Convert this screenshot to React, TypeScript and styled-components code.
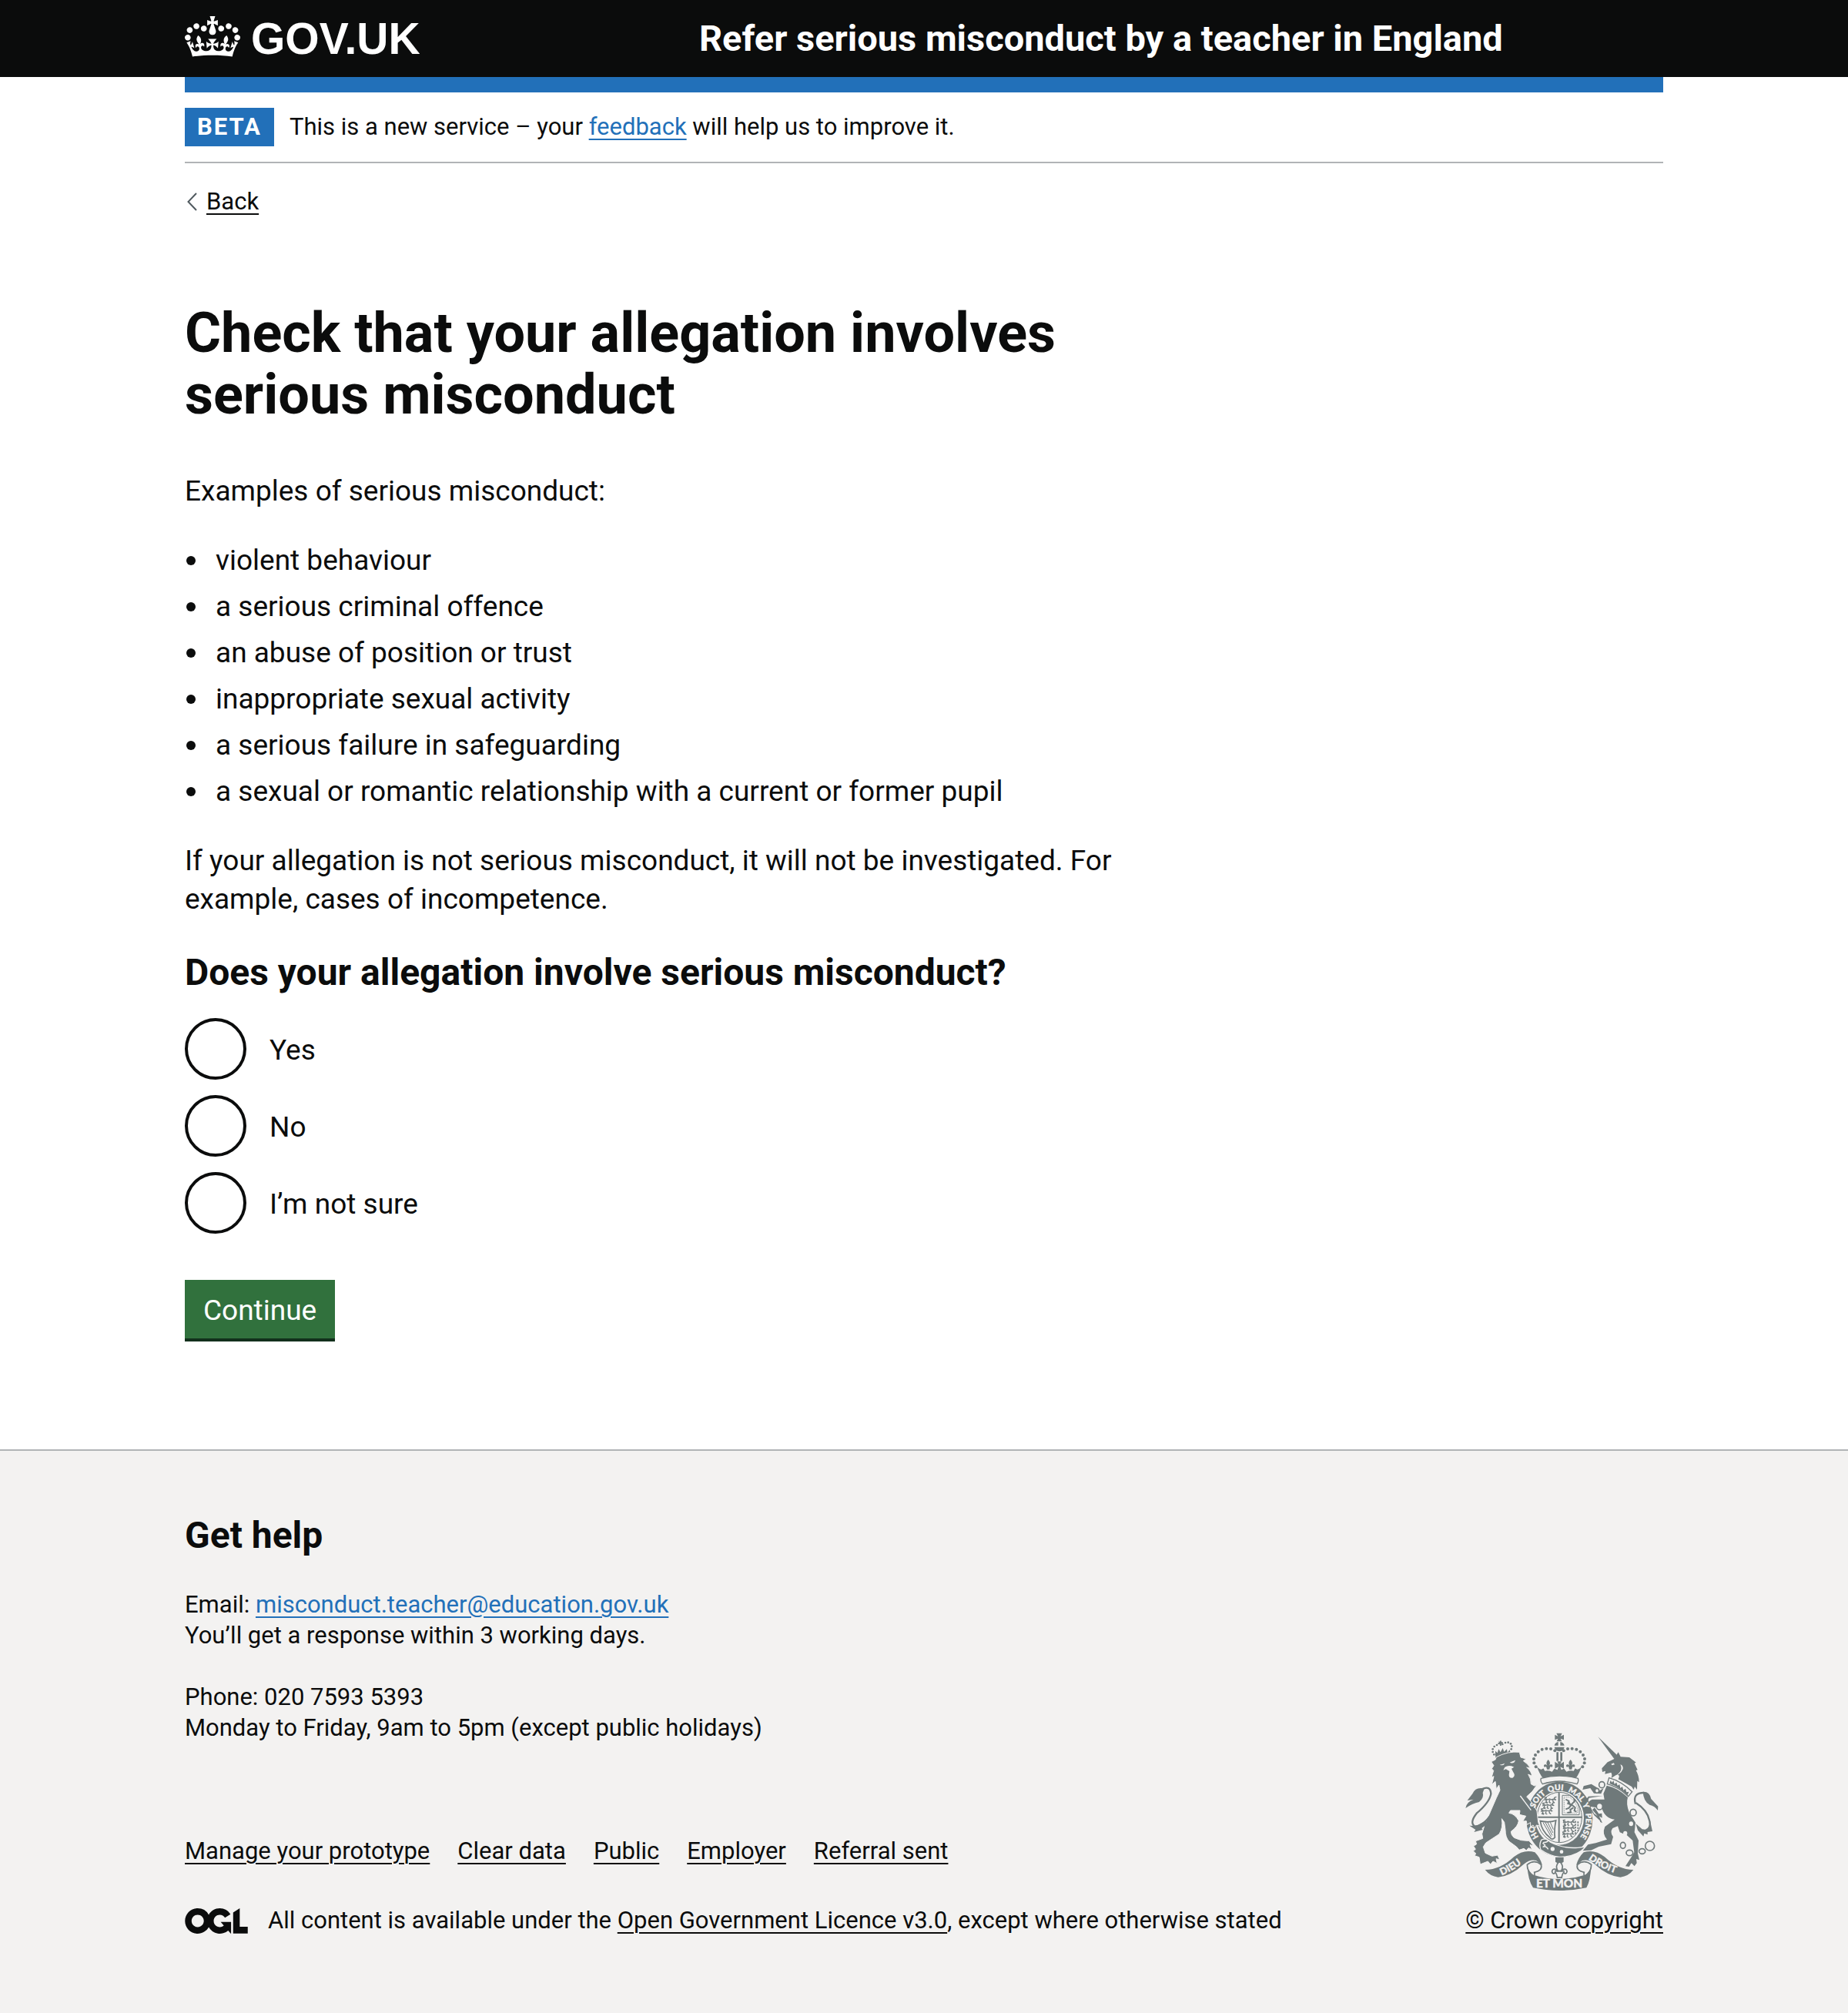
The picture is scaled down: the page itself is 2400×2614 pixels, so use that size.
import React from "react";
import styled, { createGlobalStyle, css } from "styled-components";

const color = {
  ink: "#0b0c0c",
  white: "#ffffff",
  blue: "#2270b9",
  green: "#31713d",
  greenShadow: "#12301c",
  border: "#b1b4b6",
  footer: "#f3f2f1",
  crest: "#6f797a",
  chevron: "#505a5f",
};

const GlobalStyle = createGlobalStyle`
  *, *::before, *::after { box-sizing: border-box; }
  body {
    margin: 0;
    background: ${color.footer};
    color: ${color.ink};
    font-family: Roboto, "Liberation Sans", sans-serif;
  }
`;

const bodyText = css`
  font-size: 37px;
  line-height: 50px;
`;

const smallText = css`
  font-size: 31px;
  line-height: 40px;
`;

const Container = styled.div`
  width: calc(100% - 120px);
  max-width: 1920px;
  margin: 0 auto;
`;

const Header = styled.header`
  background: ${color.ink};
  color: ${color.white};
`;

const HeaderRow = styled(Container)`
  display: grid;
  grid-template-columns: 1fr 2fr;
  align-items: center;
  min-height: 100px;
`;

const HomeLink = styled.a`
  display: flex;
  align-items: center;
  gap: 14px;
  color: inherit;
  text-decoration: none;
  font-family: "Liberation Sans", Arial, sans-serif;
  font-weight: 700;
  font-size: 57px;
  line-height: 60px;
`;

const ServiceLink = styled.a`
  padding-left: 28px;
  color: inherit;
  text-decoration: none;
  font-weight: 700;
  font-size: 47px;
  line-height: 60px;
`;

const Page = styled.div`
  background: ${color.white};
`;

const BlueBar = styled.div`
  height: 20px;
  background: ${color.blue};
`;

const PhaseBanner = styled.div`
  ${smallText}
  display: flex;
  align-items: center;
  gap: 20px;
  padding: 20px 0;
  border-bottom: 2px solid ${color.border};
`;

const Tag = styled.strong`
  padding: 5px 16px;
  background: ${color.blue};
  color: ${color.white};
  letter-spacing: 2px;
`;

const TextLink = styled.a<{ $tone?: "blue" | "ink" }>`
  color: ${(p) => (p.$tone === "blue" ? color.blue : color.ink)};
  text-decoration: underline;
  text-decoration-thickness: 2px;
  text-underline-offset: 5px;
`;

const BackRow = styled.nav`
  ${smallText}
  display: flex;
  align-items: center;
  gap: 12px;
  padding: 30px 0 0 3px;
`;

const Main = styled.main`
  padding: 111px 0 140px;
`;

const TwoThirds = styled.div`
  max-width: 1250px;
`;

const Title = styled.h1`
  margin: 0 0 60px;
  font-size: 72px;
  line-height: 80px;
  font-weight: 700;
`;

const Paragraph = styled.p`
  ${bodyText}
  margin: 0 0 40px;
`;

const BulletList = styled.ul`
  ${bodyText}
  display: grid;
  gap: 10px;
  margin: 0 0 40px;
  padding: 0 0 0 2px;
  list-style: none;
`;

const Bullet = styled.li`
  display: flex;
  align-items: center;
  gap: 26px;
  &::before {
    content: "";
    flex: none;
    width: 12px;
    height: 12px;
    border-radius: 50%;
    background: ${color.ink};
  }
`;

const Fieldset = styled.fieldset`
  margin: 0 0 60px;
  padding: 0;
  border: 0;
`;

const Legend = styled.legend`
  padding: 0 0 29px;
  font-size: 48px;
  line-height: 60px;
  font-weight: 700;
`;

const RadioList = styled.div`
  display: grid;
  gap: 20px;
`;

const RadioRow = styled.div`
  display: flex;
  align-items: center;
`;

const Radio = styled.input`
  appearance: none;
  width: 80px;
  height: 80px;
  margin: 0;
  border: 4px solid ${color.ink};
  border-radius: 50%;
  background: ${color.white};
  &:checked {
    background: radial-gradient(circle, ${color.ink} 20px, ${color.white} 21px);
  }
`;

const RadioLabel = styled.label`
  ${bodyText}
  padding: 4px 30px 0;
`;

const SubmitButton = styled.button`
  ${bodyText}
  display: block;
  padding: 15px 24px 11px;
  border: 0;
  background: ${color.green};
  box-shadow: 0 4px 0 ${color.greenShadow};
  color: ${color.white};
  font-family: inherit;
  margin-bottom: 4px;
`;

const Footer = styled.footer`
  ${smallText}
  padding: 80px 0 100px;
  border-top: 2px solid ${color.border};
  background: ${color.footer};
`;

const FooterMeta = styled(Container)`
  display: flex;
  align-items: flex-end;
  justify-content: space-between;
  gap: 60px;
`;

const FooterHeading = styled.h2`
  margin: 0 0 40px;
  font-size: 48px;
  line-height: 60px;
  font-weight: 700;
`;

const Contact = styled.p`
  margin: 0 0 40px;
`;

const FooterLinks = styled.ul`
  display: flex;
  flex-wrap: wrap;
  gap: 10px 36px;
  margin: 120px 0 50px;
  padding: 0;
  list-style: none;
`;

const Licence = styled.div`
  display: flex;
  align-items: center;
  gap: 26px;
`;

const Copyright = styled.a`
  display: grid;
  justify-items: start;
  gap: 18px;
  flex: none;
  color: ${color.ink};
  text-decoration: none;
`;

const CopyrightText = styled.span`
  text-decoration: underline;
  text-decoration-thickness: 2px;
  text-underline-offset: 5px;
`;

const CrownSvg = styled.svg`
  margin-bottom: 5px;
`;

const Crown = () => (
  <CrownSvg width="72" height="53" viewBox="0 0 132 97" fill="currentColor" aria-hidden="true">
    <path
      fillRule="evenodd"
      d="M25 30.2c3.5 1.5 7.7-.2 9.1-3.7 1.5-3.6-.2-7.8-3.9-9.2-3.6-1.4-7.6.3-9.1 3.9-1.4 3.5.3 7.5 3.9 9zM9 39.5c3.6 1.5 7.8-.2 9.2-3.7 1.5-3.6-.2-7.8-3.9-9.1-3.6-1.5-7.6.2-9.1 3.8-1.4 3.5.3 7.5 3.8 9zM4.4 57.2c3.5 1.5 7.7-.2 9.1-3.8 1.5-3.6-.2-7.7-3.9-9.1-3.5-1.5-7.6.3-9.1 3.8-1.4 3.5.3 7.6 3.9 9.1zm38.3-21.4c3.5 1.5 7.7-.2 9.1-3.8 1.5-3.6-.2-7.7-3.9-9.1-3.6-1.5-7.6.3-9.1 3.8-1.3 3.6.4 7.7 3.9 9.1zm64.4-5.6c-3.6 1.5-7.8-.2-9.1-3.7-1.5-3.6.2-7.8 3.8-9.2 3.6-1.4 7.7.3 9.2 3.9 1.3 3.5-.4 7.5-3.9 9zm15.9 9.3c-3.6 1.5-7.7-.2-9.1-3.7-1.5-3.6.2-7.8 3.7-9.1 3.6-1.5 7.7.2 9.2 3.8 1.5 3.5-.3 7.5-3.8 9zm4.7 17.7c-3.6 1.5-7.8-.2-9.2-3.8-1.5-3.6.2-7.7 3.9-9.1 3.6-1.5 7.7.3 9.2 3.8 1.3 3.5-.4 7.6-3.9 9.1zM89.3 35.8c-3.6 1.5-7.8-.2-9.2-3.8-1.4-3.6.2-7.7 3.9-9.1 3.6-1.5 7.7.3 9.2 3.8 1.4 3.6-.3 7.7-3.9 9.1zM69.7 17.7l8.9 4.7V9.3l-8.9 2.8c-.2-.3-.5-.6-.9-.9L72.4 0H59.6l3.5 11.2c-.3.3-.6.5-.9.9l-8.8-2.8v13.1l8.8-4.7c.3.3.6.7.9.9l-5 15.4v.1c-.2.8-.4 1.6-.4 2.4 0 4.1 3.1 7.5 7 8.1h.2c.3 0 .7.1 1 .1.4 0 .7 0 1-.1h.2c4-.6 7.1-4.1 7.1-8.1 0-.8-.1-1.7-.4-2.4V34l-5.1-15.4c.4-.2.7-.6 1-.9zM66 92.8c16.9 0 32.8 1.1 47.1 3.2 4-16.9 8.9-26.7 14-33.5l-9.6-3.4c1 4.9 1.1 7.2 0 10.2-1.5-1.4-3-4.3-4.2-8.7L108.6 76c2.8-2 5-3.2 7.5-3.3-4.4 9.4-10 11.9-13.6 11.2-4.3-.8-6.3-4.6-5.6-7.9 1-4.7 5.7-5.9 8-.5 4.3-8.7-3-11.4-7.6-8.8 7.1-7.2 7.9-13.5 2.1-21.1-8 6.1-8.1 12.3-4.5 20.8-4.7-5.4-12.1-2.5-9.5 6.2 3.4-5.2 7.9-2 7.2 3.1-.6 4.3-6.4 7.8-13.5 7.2-10.3-.9-10.9-8-11.2-13.8 2.5-.5 7.1 1.8 11 7.3L80.2 60c-4.1 4.4-8 5.3-12.3 5.4 1.4-4.4 8-11.6 8-11.6H55.5s6.4 7.2 7.9 11.6c-4.2-.1-8-1-12.3-5.4l1.4 16.4c3.9-5.5 8.5-7.7 10.9-7.3-.3 5.8-.9 12.8-11.1 13.8-7.2.6-12.9-2.9-13.5-7.2-.7-5 3.8-8.3 7.1-3.1 2.7-8.7-4.6-11.6-9.4-6.2 3.7-8.5 3.6-14.7-4.6-20.8-5.8 7.6-5 13.9 2.2 21.1-4.7-2.6-11.9.1-7.7 8.8 2.3-5.5 7.1-4.2 8.1.5.7 3.3-1.3 7.1-5.7 7.9-3.5.7-9-1.8-13.5-11.2 2.5.1 4.7 1.3 7.5 3.3l-4.7-15.4c-1.2 4.4-2.7 7.2-4.3 8.7-1.1-3-.9-5.3 0-10.2l-9.5 3.4c5 6.9 9.9 16.7 14 33.5 14.8-2.1 30.8-3.2 47.7-3.2z"
    />
  </CrownSvg>
);

const Chevron = () => (
  <svg width="13" height="24" viewBox="0 0 13 24" fill="none" stroke={color.chevron} strokeWidth="2" aria-hidden="true">
    <path d="M12 1 1.5 12 12 23" />
  </svg>
);

const OglLogo = () => (
  <svg width="82" height="33" viewBox="0 0 483.2 195.7" fill="currentColor" aria-hidden="true">
    <path d="M421.5 142.8V.1l-50.7 32.3v161.1h112.4v-50.7zm-122.3-9.6A47.12 47.12 0 0 1 221 97.8c0-26 21.1-47.1 47.1-47.1 16.7 0 31.4 8.7 39.7 21.8l42.7-27.2A97.63 97.63 0 0 0 268.1 0c-36.5 0-68.3 20.1-85.1 49.7A98 98 0 0 0 97.8 0C43.9 0 0 43.9 0 97.8s43.9 97.8 97.8 97.8c36.5 0 68.3-20.1 85.1-49.7a97.76 97.76 0 0 0 149.6 25.4l19.4 22.2h3v-87.8h-80l24.3 27.5zM97.8 145c-26 0-47.1-21.1-47.1-47.1s21.1-47.1 47.1-47.1 47.1 21.1 47.1 47.1S123.8 145 97.8 145" />
  </svg>
);

/* Beads on the left arch of the royal crown; the right arch mirrors them. */
const beads = [
  [420, 128], [404, 121], [387, 120], [370, 123], [355, 132], [344, 145], [338, 160], [339, 176], [346, 191],
];

const smallBeads = [
  [138, 113], [133, 103], [133, 92], [139, 82], [149, 76], [171, 73], [182, 67], [193, 66], [203, 71], [207, 81], [205, 92],
];

const Fleur = ({ x, y, s = 1 }: { x: number; y: number; s?: number }) => (
  <path
    transform={`translate(${x} ${y}) scale(${s})`}
    d="M0-20c8 9 9 15 3 24 5-8 15-7 14 1-1 5-6 5-7 1-3 2-4 5-5 12H-5c-1-7-2-10-5-12-1 4-6 4-7-1-1-8 9-9 14-1-6-9-5-15 3-24z"
  />
);

const GuardLion = ({ x, y }: { x: number; y: number }) => (
  <path
    transform={`translate(${x} ${y})`}
    fill="none"
    strokeWidth="4"
    d="M0 6l6-6 7 3 6-3 8 3 10-3 8 4M8 2l-2 9 6 4M20 3l-2 10 6 3M32 2l1 9 6 4M2 13l9 3M40 5l-2-10 8-3M3 2l-2-7 8-1"
  />
);

const Crest = () => {
  const bg = color.footer;
  return (
    <svg width="251" height="206" viewBox="71 58 753 618" fill={color.crest} aria-hidden="true">
      <defs>
        <path id="garter" d="M438 506A103 112 0 0 1 438 282A103 112 0 0 1 438 506" />
        <path id="scroll-left" d="M213 614Q262 595 318 546" />
        <path id="scroll-right" d="M550 551Q606 592 676 612" />
      </defs>

      {/* royal crown */}
      <path d="M426 60h22l-6 12 13-6v20l-13-5 5 11h-20l5-11-12 5v-20l12 6z" />
      <path d="M433 94v14h-15q3-12 15-14zM441 94q13 2 16 14h-16zM418 114h39q-3 14-19 17-17-3-20-17z" />
      {beads.map(([x, y]) => (
        <g key={`${x}-${y}`}>
          <circle cx={x} cy={y} r="6" />
          <circle cx={874 - x} cy={y} r="6" />
        </g>
      ))}
      <path d="M426 134h8v34h-8zM441 134h8v34h-8z" />
      <path d="M420 171l14 9-5-10h17l-5 10 14-9v27l-14-7 5 14h-17l5-14-14 7z" />
      <Fleur x={394} y={183} />
      <Fleur x={481} y={183} />
      <path d="M349 188q14 20 26 9l6 10q12-4 28 3l9-12 19 8 19-8 9 12q16-7 28-3l6-10q12 11 26-9-10 30-23 47-64-18-129 0-14-18-24-47z" />
      <path d="M366 236q71-19 144 0 4 12-4 22-68-22-134 0-10-10-6-22z" fill={bg} stroke={color.crest} strokeWidth="4" />

      {/* garter and shield */}
      <ellipse cx="438" cy="395" rx="129" ry="146" />
      <ellipse cx="438" cy="390" rx="95" ry="105" fill={bg} />
      <ellipse cx="438" cy="388" rx="87" ry="98" fill="none" stroke={color.crest} strokeWidth="3" />
      <path d="M436 290v196M350 387h176" fill="none" stroke={color.crest} strokeWidth="6" />
      <g stroke={color.crest}>
        <GuardLion x={380} y={316} />
        <GuardLion x={372} y={338} />
        <GuardLion x={366} y={360} />
        <GuardLion x={452} y={404} />
        <GuardLion x={452} y={427} />
        <GuardLion x={450} y={450} />
        <path d="M449 302h28q30 18 38 50v26h-66z" fill="none" strokeWidth="3" />
        <path d="M456 309h20q24 15 32 43v19h-52z" fill="none" strokeWidth="2" strokeDasharray="5 3" />
        <path d="M462 318l12 6-3 10 14 4 14 12-3 12 8 4M484 340l-10 12-12 4M492 350l-12 8 2 10-14 2M486 336l12-12-4-8M474 326l6 14" fill="none" strokeWidth="6" />
        <path d="M363 402q34 8 61-2-8 40-4 66-10 12-18 2-34-26-39-66z" fill="none" strokeWidth="5" />
        <path d="M374 408l32 56M383 408l27 50M392 408l20 40M402 407l12 28" fill="none" strokeWidth="3" />
        <path d="M500 402v52M510 404v38" fill="none" strokeWidth="5" strokeDasharray="7 4" />
      </g>
      <path d="M367 476q20-10 34 8 50 26 108 22l32-4q-40 42-104 40-38-4-72-28-8-18 2-38z" stroke={bg} strokeWidth="4" />
      <circle cx="384" cy="497" r="19" />
      <path d="M374 486q14 0 22-8M374 502q12-4 20 10M372 488l10 8-9 8" fill="none" stroke={bg} strokeWidth="4" />
      <circle cx="411" cy="511" r="8" fill={bg} />
      <circle cx="446" cy="522" r="7" fill={bg} />

      {/* lion */}
      <g transform="translate(45 30)">
        {smallBeads.map(([x, y]) => (
          <circle key={`${x}-${y}`} cx={x} cy={y} r="4" />
        ))}
        <path d="M156 60l5 4 1-5 5 1-1 5 6-1v7l-6-1 1 8-6 1-1-7-6 2-1-6 5-2zM143 115l0-16 8 8 5-15 7 12 9-16 5 14 11-10 2 13 9-10 4 14-8 7q-26 0-50 13z" />
        <path
          stroke={bg}
          strokeWidth="3"
          d="M127 141l16-8 4-10q45-24 90-19l5 20 21 6-11 8q20 12 27 28l-14-3q18 14 21 34l-15-7q12 18 11 38l13 7 10-4-18 26-22 20 26 30 14 26 5 44 6 14-13-3-5 12-8-12-10 6v-16l-14 8-2-14-14 1 12-20-25-6 2-16-37 0-6 10q24 3 38 30-2 22-30 42 0 14 12 24 26 14 58 12l18 20-14-4 8 18-14-6-8 10-10-8-18 6-10-12-30-22q-14-16-14-44l-4-30-10-14q6 34-10 60l-52 34-10 16 8 24 26 12 22-4 8 18-14-4 4 18-16-8-10 12-10-12-30 12-4-28-18-6 5-8-10-10 9-7-8-12 12-8-4-12 28-10-3-18 10-34 26-60 20-46 14-30-4-20-10 16-4-30-14 12 8-32-9 4 8-26-7-8 8-12z"
        />
        <path d="M160 153q10-2 20-6-6 12-20 6zM199 144l22-9q-4 14-18 11zM180 162q12-8 26-4l10 4-10 6 6 12q12 16-2 24-14 2-14-12l2-14-14-8-10 4z" fill={bg} />
        <path d="M240 274l42 56" fill="none" stroke={bg} strokeWidth="4" />
        <path d="M90 248Q124 232 126 266Q120 300 70 342Q42 378 62 392Q92 396 128 344" fill="none" stroke={color.crest} strokeWidth="7" />
        <path d="M100 246Q66 238 54 266L34 292 58 288Q30 298 27 322 52 304 80 298 100 282 94 262zM42 390l26 2 38-22 8 12-24 18 4 6-34 9 6-9z" />
      </g>

      {/* unicorn */}
      <g transform="translate(435 30)">
        <path d="M153 44l75 72-12 14z" />
        <path d="M215 131l17-27 9 18 34 2 26 20-6 3 12 26-6 2q12 20 12 46l-7-5-1 34-9-12-4 12-8-12-52-29q10-20-8-16l-20 12q6-12 0-22l-24 6 2-12-12 4-2-14 22-24z" />
        <path d="M204 150l10-4 4 6-10 3zM240 152q14 28-26 48 26-8 36-30 2-14-10-18z" fill={bg} />
        <path d="M196 204q46 12 90 54l-15 18q-40-38-82-48z" fill={bg} stroke={color.crest} strokeWidth="4" />
        <path d="M198 226l4-12 6 8 5-8 4 14 8-6 4 12 8-4 3 14 8-6 4 14 8-6 4 14 9-2-5 14q-32-32-70-46z" />
        <path d="M187 234q42 8 82 46-8 26 6 60l24 38-4 38 16 32-3 50 6 26-12-4 2 16-9 12-12-12-9 14-14-2 22-34 12-20-6-46-22-20-28-12-8-24-20 8q-12 16 2 34l-8 28-48 10-30 14-32 2 20-24 30-6 44-14q-20-22-8-50l38-28q-38-4-50-44l-46-6 16 28 22 14 10 22-8-4-2-6-22-20-24-40q0-16 16-22l48 0-4-22z" />
        <path d="M175 244l-10 22-28-2-14-20-30 6 4-14 30-8 22 14 10 12zM172 274l-54 8-10 28-2-22 10-12z" />
        <path d="M140 320l16 24 12-2 1 18-10-6-4 10-6-14-18-22z" />
        <g fill={bg} stroke={color.crest} strokeWidth="5">
          <ellipse cx="168" cy="231" rx="11" ry="12" />
          <ellipse cx="149" cy="254" rx="8" ry="9" />
          <ellipse cx="159" cy="315" rx="12" ry="13" />
          <ellipse cx="290" cy="339" rx="12" ry="13" />
          <ellipse cx="250" cy="467" rx="10" ry="12" />
          <ellipse cx="276" cy="496" rx="13" ry="11" />
          <ellipse cx="325" cy="490" rx="12" ry="10" />
          <circle cx="355" cy="469" r="18" />
        </g>
        <ellipse cx="282" cy="383" rx="8" ry="9" fill={bg} />
        <ellipse cx="259" cy="420" rx="8" ry="9" fill={bg} />
        <path d="M299 306Q286 262 332 262M301 302Q346 330 354 372 360 398 340 408" fill="none" stroke={color.crest} strokeWidth="7" />
        <path d="M328 258q26-2 32 28l27 29-1 16q-12-18-32-22-24-14-26-51zM355 366q8 46-30 38l-25-22 8 26 22 24 3-12 13 5v-10l19-3z" />
      </g>

      {/* garter motto */}
      <g fill={bg} stroke={bg} fontFamily="Lato, 'Liberation Sans', sans-serif" fontWeight="900" fontSize="31">
        <text>
          <textPath href="#garter" startOffset="94">HO</textPath>
        </text>
        <text>
          <textPath href="#garter" startOffset="211">SOIT</textPath>
        </text>
        <text>
          <textPath href="#garter" startOffset="294">QUI</textPath>
        </text>
        <text>
          <textPath href="#garter" startOffset="370">MAL</textPath>
        </text>
        <text>
          <textPath href="#garter" startOffset="447">Y</textPath>
        </text>
        <text>
          <textPath href="#garter" startOffset="485">PENSE</textPath>
        </text>
      </g>

      {/* motto scroll */}
      {[undefined, "matrix(-1 0 0 1 874 0)"].map((transform) => (
        <g key={transform ?? "left"} transform={transform}>
          <path d="M148 592q60 0 112-50 40-32 82-18 20 20 29 50l-24-18q-24-6-48 14-50 46-100 51-32-4-51-29z" />
          <path d="M312 572q28-22 54 0 8 22-26 30 4 14-6 16-22-18-22-46z" fill={bg} stroke={color.crest} strokeWidth="5" />
        </g>
      ))}
      <path d="M313 578q6 24 24 34 100 32 200 0 18-10 24-34-2 56-18 84-106 22-208 0-20-30-22-84z" />
      <g fill={bg} stroke={bg} fontFamily="Lato, 'Liberation Sans', sans-serif" fontWeight="900">
        <text fontSize="38">
          <textPath href="#scroll-left">DIEU</textPath>
        </text>
        <text fontSize="38">
          <textPath href="#scroll-right">DROIT</textPath>
        </text>
        <text x="437" y="662" fontSize="46" textAnchor="middle">
          ET MON
        </text>
      </g>

      {/* plant badge */}
      <path d="M422 543h32v18l-6 4h-20l-6-4z" />
      <g fill={bg} stroke={color.crest} strokeWidth="3">
        <Fleur x={438} y={592} s={1.7} />
      </g>
      <path d="M419 597h38" stroke={color.crest} strokeWidth="6" />
    </svg>
  );
};

const examples = [
  "violent behaviour",
  "a serious criminal offence",
  "an abuse of position or trust",
  "inappropriate sexual activity",
  "a serious failure in safeguarding",
  "a sexual or romantic relationship with a current or former pupil",
];

const answers = [
  { id: "yes", label: "Yes" },
  { id: "no", label: "No" },
  { id: "not-sure", label: "I’m not sure" },
];

const footerLinks = ["Manage your prototype", "Clear data", "Public", "Employer", "Referral sent"];

export default function App() {
  return (
    <>
      <GlobalStyle />
      <Header>
        <HeaderRow>
          <HomeLink href="#">
            <Crown />
            GOV.UK
          </HomeLink>
          <ServiceLink href="#">Refer serious misconduct by a teacher in England</ServiceLink>
        </HeaderRow>
      </Header>

      <Page>
        <Container>
          <BlueBar />
          <PhaseBanner>
            <Tag>BETA</Tag>
            <span>
              This is a new service – your{" "}
              <TextLink href="#" $tone="blue">
                feedback
              </TextLink>{" "}
              will help us to improve it.
            </span>
          </PhaseBanner>
          <BackRow>
            <Chevron />
            <TextLink href="#">Back</TextLink>
          </BackRow>

          <Main>
            <TwoThirds>
              <Title>Check that your allegation involves serious misconduct</Title>
              <Paragraph>Examples of serious misconduct:</Paragraph>
              <BulletList>
                {examples.map((text) => (
                  <Bullet key={text}>{text}</Bullet>
                ))}
              </BulletList>
              <Paragraph>
                If your allegation is not serious misconduct, it will not be investigated. For example, cases of
                incompetence.
              </Paragraph>
              <form onSubmit={(e) => e.preventDefault()}>
                <Fieldset>
                  <Legend>Does your allegation involve serious misconduct?</Legend>
                  <RadioList>
                    {answers.map(({ id, label }) => (
                      <RadioRow key={id}>
                        <Radio type="radio" name="serious" id={id} value={id} />
                        <RadioLabel htmlFor={id}>{label}</RadioLabel>
                      </RadioRow>
                    ))}
                  </RadioList>
                </Fieldset>
                <SubmitButton type="submit">Continue</SubmitButton>
              </form>
            </TwoThirds>
          </Main>
        </Container>
      </Page>

      <Footer>
        <FooterMeta>
          <div>
            <FooterHeading>Get help</FooterHeading>
            <Contact>
              Email:{" "}
              <TextLink href="mailto:misconduct.teacher@education.gov.uk" $tone="blue">
                misconduct.teacher@education.gov.uk
              </TextLink>
              <br />
              You’ll get a response within 3 working days.
            </Contact>
            <Contact>
              Phone: 020 7593 5393
              <br />
              Monday to Friday, 9am to 5pm (except public holidays)
            </Contact>
            <FooterLinks>
              {footerLinks.map((text) => (
                <li key={text}>
                  <TextLink href="#">{text}</TextLink>
                </li>
              ))}
            </FooterLinks>
            <Licence>
              <OglLogo />
              <span>
                All content is available under the <TextLink href="#">Open Government Licence v3.0</TextLink>, except
                where otherwise stated
              </span>
            </Licence>
          </div>
          <Copyright href="#">
            <Crest />
            <CopyrightText>© Crown copyright</CopyrightText>
          </Copyright>
        </FooterMeta>
      </Footer>
    </>
  );
}
